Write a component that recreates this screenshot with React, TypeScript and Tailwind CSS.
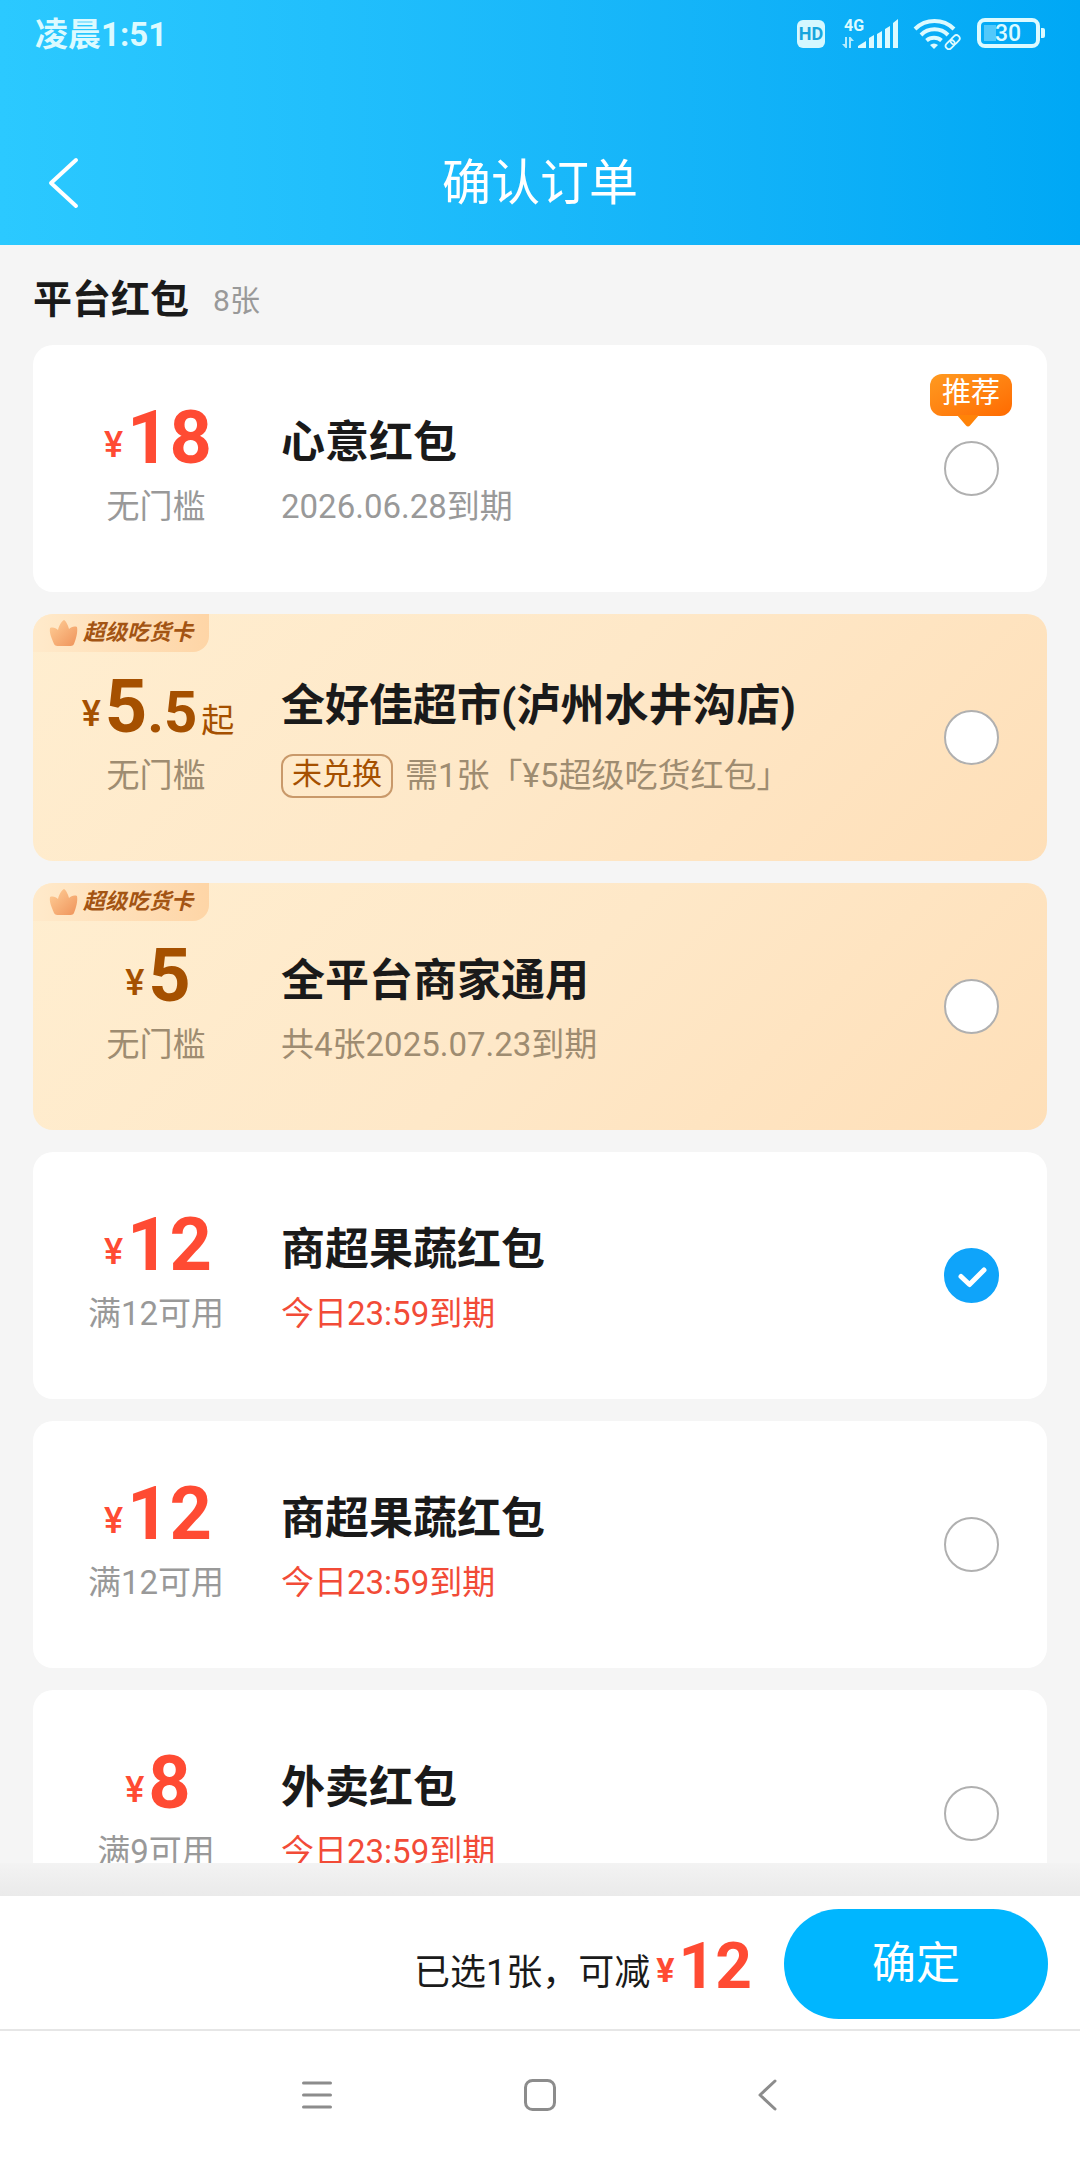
import React, { useState } from 'react';
import clsx from 'clsx';

type Coupon = {
  id: number;
  amount: string;
  decimal?: string;
  limit: string;
  title: string;
  note: string;
  urgent?: boolean;
  gold?: boolean;
  tag?: string;
  recommended?: boolean;
};

const COUPONS: Coupon[] = [
  { id: 1, amount: '18', limit: '无门槛', title: '心意红包', note: '2026.06.28到期', recommended: true },
  {
    id: 2,
    amount: '5',
    decimal: '.5',
    limit: '无门槛',
    title: '全好佳超市(泸州水井沟店)',
    note: '需1张「¥5超级吃货红包」',
    gold: true,
    tag: '未兑换',
  },
  { id: 3, amount: '5', limit: '无门槛', title: '全平台商家通用', note: '共4张2025.07.23到期', gold: true },
  { id: 4, amount: '12', limit: '满12可用', title: '商超果蔬红包', note: '今日23:59到期', urgent: true },
  { id: 5, amount: '12', limit: '满12可用', title: '商超果蔬红包', note: '今日23:59到期', urgent: true },
  { id: 6, amount: '8', limit: '满9可用', title: '外卖红包', note: '今日23:59到期', urgent: true },
];

const StatusBar = () => (
  <div className="flex items-center justify-between h-[68px] pl-[35px] pr-[34px] text-[#dcfaff]">
    <span className="text-[33px] leading-none font-bold">凌晨1:51</span>
    <div className="flex items-center">
      <span className="flex items-center justify-center w-7 h-7 mr-4 rounded-md bg-[#d5f8ff] text-[18px] leading-none font-bold text-[#17a5dd]">
        HD
      </span>
      <svg className="w-[60px] h-10 mr-3" viewBox="0 0 60 40" fill="currentColor" aria-hidden="true">
        <text x="3" y="17" fontSize="16" fontWeight="700">4G</text>
        <path d="M4 23h2v11H4.500L1 30h3zM8 34V23h1.500L13 27H10v7z" opacity="0.8" />
        <path d="M17 34v-2l8-5v7zM28 34V24l5-3v13zM36 34V20l5-3v17zM44 34V15l5-3v22zM52 34V9l5-4v29z" />
      </svg>
      <svg className="w-12 h-8 mr-4" viewBox="0 0 48 32" fill="none" stroke="currentColor" aria-hidden="true">
        <path d="M2 11a28 28 0 0 1 39 0" strokeWidth="4" />
        <path d="M8 17a19 19 0 0 1 27 0" strokeWidth="4" />
        <path d="M13.500 22.500a11.500 11.500 0 0 1 15 0" strokeWidth="4" />
        <path d="M21 31l-4-4a6 6 0 0 1 8 0z" fill="currentColor" stroke="none" />
        <g transform="rotate(-45 39.500 24)" strokeWidth="1.800">
          <rect x="31" y="21" width="10" height="6.500" rx="3.200" />
          <rect x="38" y="21" width="10" height="6.500" rx="3.200" />
        </g>
      </svg>
      <svg className="w-[69px] h-8" viewBox="0 0 69 32" fill="none" aria-hidden="true">
        <rect x="2" y="2" width="59" height="26" rx="6" stroke="currentColor" strokeWidth="4" />
        <rect x="7" y="7" width="12" height="16" fill="#52c9fb" />
        <path d="M64 10h2a2 2 0 0 1 2 2v6a2 2 0 0 1-2 2h-2z" fill="currentColor" />
        <text x="31" y="23" fontSize="23" fontWeight="500" textAnchor="middle" fill="currentColor">30</text>
      </svg>
    </div>
  </div>
);

const GoldBadge = () => (
  <div className="absolute top-0 left-0 flex items-center gap-1 h-[38px] pl-4 pr-4 rounded-br-2xl bg-linear-to-r from-[#ffeacb] to-[#fed5a6]">
    <svg className="w-[30px] h-7" viewBox="0 0 30 28" aria-hidden="true">
      <defs>
        <linearGradient id="crown" x1="0" y1="0" x2="1" y2="1">
          <stop offset="0" stopColor="#ffcf98" />
          <stop offset="1" stopColor="#ef935a" />
        </linearGradient>
      </defs>
      <path
        d="M15 1c2 1 4 5 5 9 2-2 5-3 8-2 1 5-1 12-3 17-1 2-3 2-5 2H10c-2 0-4 0-5-2C3 20 0 14 1 9c3-1 6 0 8 2 1-5 4-9 6-10z"
        fill="url(#crown)"
      />
    </svg>
    <span className="text-[22px] leading-none font-bold italic text-[#a35413]">超级吃货卡</span>
  </div>
);

const Price = ({ amount, decimal, gold }: { amount: string; decimal?: string; gold?: boolean }) => (
  <p className={clsx('flex items-end justify-center gap-1 pl-1 font-bold leading-none', gold ? 'text-[#a55000]' : 'text-[#ff4b33]')}>
    <span className="pb-3 text-[36px] font-medium">¥</span>
    <span className="flex items-baseline">
      <span className="text-[74px]">{amount}</span>
      {decimal && <span className="text-[58px]">{decimal}</span>}
      {decimal && <span className="ml-1 text-[33px] font-normal">起</span>}
    </span>
  </p>
);

const CouponCard = ({ coupon, checked, onSelect }: { coupon: Coupon; checked: boolean; onSelect: () => void }) => (
  <label
    className={clsx(
      'relative flex h-[247px] rounded-[20px] overflow-hidden cursor-pointer',
      coupon.gold ? 'bg-linear-135 from-[#ffeed0] via-[#fee8c8] to-[#fedfb8]' : 'bg-white'
    )}
  >
    {coupon.gold && <GoldBadge />}
    <div className="w-[246px] shrink-0 pt-14 text-center">
      <Price amount={coupon.amount} decimal={coupon.decimal} gold={coupon.gold} />
      <p className={clsx('mt-2 text-[33px] leading-[48px]', coupon.gold ? 'text-[#9e8c71]' : 'text-[#999999]')}>
        {coupon.limit}
      </p>
    </div>
    <div className={clsx('flex-1 min-w-0 pl-0.5', coupon.tag ? 'pt-[60px]' : 'pt-[66px]')}>
      <h3 className="text-[44px] leading-[64px] font-bold text-[#1a1a1a] truncate">{coupon.title}</h3>
      <p
        className={clsx(
          'flex items-center gap-3 text-[33px] leading-[48px]',
          coupon.tag ? 'mt-3.5' : 'mt-2',
          coupon.urgent ? 'text-[#f24b37]' : coupon.gold ? 'text-[#9e8c71]' : 'text-[#999999]'
        )}
      >
        {coupon.tag && (
          <span className="h-11 px-[9px] rounded-xl border-2 border-[#c9996a] text-[30px] leading-9 text-[#a55000]">
            {coupon.tag}
          </span>
        )}
        {coupon.note}
      </p>
    </div>
    <div className="relative flex items-center w-[55px] mr-12 shrink-0">
      {coupon.recommended && (
        <span className="absolute top-[29px] -left-3.5 w-[82px] h-[42px] rounded-xl bg-linear-to-br from-[#ff9a1f] to-[#ff6a00] text-center text-[29px] leading-[38px] text-white">
          推荐
          <svg className="absolute left-[27px] top-[41px] w-[22px] h-3" viewBox="0 0 22 12" fill="#ff8308" aria-hidden="true">
            <path d="M0 0h22L13 10.500a2.500 2.500 0 0 1-4 0z" />
          </svg>
        </span>
      )}
      <input
        type="radio"
        name="coupon"
        checked={checked}
        onChange={onSelect}
        className="appearance-none w-[55px] h-[55px] rounded-full border-2 border-[#b0b0b0] bg-white checked:border-[#0fa4fa] checked:bg-[#0fa4fa]"
      />
      {checked && (
        <svg className="absolute inset-x-0 inset-y-24 w-[55px] h-[55px]" viewBox="0 0 55 55" fill="none" aria-hidden="true">
          <path d="M17 28.500l8.500 8L40 22" stroke="#fff" strokeWidth="5" strokeLinecap="round" strokeLinejoin="round" />
        </svg>
      )}
    </div>
  </label>
);

export default function App() {
  const [selected, setSelected] = useState(4);
  const current = COUPONS.find((c) => c.id === selected);

  return (
    <div className="flex flex-col h-screen overflow-hidden bg-[#f5f5f5] font-[Roboto,'Noto_Sans_CJK_SC',sans-serif]">
      <header className="h-[245px] shrink-0 bg-linear-to-r from-[#2bc9ff] to-[#00a8f5]">
        <StatusBar />
        <div className="grid grid-cols-[120px_1fr_120px] items-center h-[230px] text-white">
          <button type="button" aria-label="返回" className="pl-[47px]">
            <svg className="w-8 h-[52px]" viewBox="0 0 32 52" fill="none" stroke="currentColor" strokeWidth="4" strokeLinecap="round" strokeLinejoin="round">
              <path d="M29 3L4 26l25 23" />
            </svg>
          </button>
          <h1 className="text-[49px] leading-none text-center">确认订单</h1>
        </div>
      </header>

      <main className="flex-1 min-h-0 overflow-hidden px-[33px]">
        <div className="flex items-center gap-6 h-[100px] pt-[11px]">
          <h2 className="text-[39px] font-bold text-[#1a1a1a]">平台红包</h2>
          <span className="text-[30px] text-[#999999]">8张</span>
        </div>
        <div className="flex flex-col gap-[22px]">
          {COUPONS.map((coupon) => (
            <CouponCard
              key={coupon.id}
              coupon={coupon}
              checked={coupon.id === selected}
              onSelect={() => setSelected(coupon.id)}
            />
          ))}
        </div>
      </main>

      <div className="h-[33px] shrink-0 bg-linear-to-b from-[#f3f3f3] to-[#eaeaea]" />
      <footer className="flex items-center justify-end h-[135px] shrink-0 pt-0.5 pr-8 bg-white border-b-2 border-[#e6e6e6]">
        <p className="flex items-end pt-1.5 mr-8 leading-none text-[#1a1a1a]">
          <span className="pb-2 text-[36px]">已选1张，可减</span>
          <span className="ml-1.5 pb-3 text-[34px] font-bold text-[#ff4b33]">¥</span>
          <span className="ml-1 text-[64px] font-bold text-[#ff4b33]">{current?.amount}</span>
        </p>
        <button type="button" className="w-[264px] h-[110px] rounded-full bg-[#00b6ff] text-[44px] text-white">
          确定
        </button>
      </footer>

      <nav className="flex items-center justify-center gap-36 h-[129px] shrink-0 pb-0.5 bg-white text-[#8c8c8c]">
        <button type="button" aria-label="菜单" className="flex justify-center w-20">
          <svg className="w-8 h-8" viewBox="0 0 32 32" fill="none" stroke="currentColor" strokeWidth="3" strokeLinecap="round">
            <path d="M3.500 4h27M3.500 16h27M3.500 28h27" />
          </svg>
        </button>
        <button type="button" aria-label="主页" className="flex justify-center w-20">
          <svg className="w-8 h-8" viewBox="0 0 32 32" fill="none" stroke="currentColor" strokeWidth="3">
            <rect x="1.500" y="1.500" width="29" height="29" rx="7" />
          </svg>
        </button>
        <button type="button" aria-label="后退" className="flex justify-center w-20">
          <svg className="w-8 h-8" viewBox="0 0 32 32" fill="none" stroke="currentColor" strokeWidth="3" strokeLinecap="round" strokeLinejoin="round">
            <path d="M27 2L12 16l15 14" />
          </svg>
        </button>
      </nav>
    </div>
  );
}
